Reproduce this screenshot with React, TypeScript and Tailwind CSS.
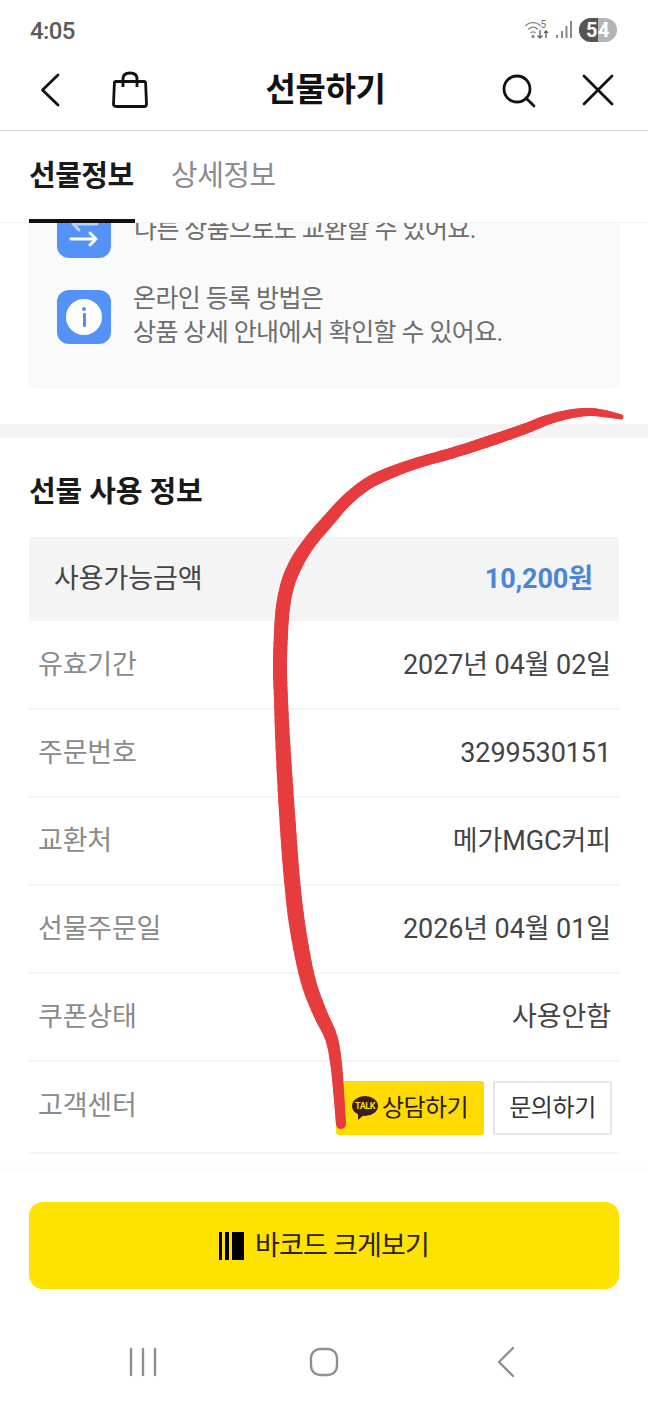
const FONT = "font-['Roboto','Noto_Sans_CJK_KR',sans-serif]";

function Row({ label, value }: { label: string; value: string }) {
  return (
    <div className="h-[88px] flex items-center justify-between border-b-2 border-[#f5f5f5] pl-[9px] pr-[8px]">
      <span className="text-[27px] text-[#8a8a8a] tracking-[-0.2px]">{label}</span>
      <span className="text-[27px] text-[#444444] tracking-[-0.1px]">{value}</span>
    </div>
  );
}

// Hand-drawn stroke: centre line points [x, y, width]
const STROKE: [number, number, number][] = [
  [621, 417, 5], [607, 414, 7], [590, 412, 8], [570, 414, 9], [547, 420, 10], [527, 428, 10.5],
  [500, 437.5, 11], [473, 446.5, 11], [447, 454.5, 11], [417, 463, 11], [387, 474, 12], [367, 484, 12],
  [347, 500, 12], [327, 522, 13], [310, 542, 13], [297, 562, 14], [288, 583, 14], [283, 607, 14],
  [281, 633, 14], [280, 667, 14], [281, 700, 14], [283, 747, 15], [287, 813, 16], [292, 880, 16],
  [298, 930, 16], [308, 980, 15], [320, 1013, 14], [331, 1037, 12.5], [336, 1063, 11.5], [339, 1097, 10.5],
  [341, 1124, 10],
];

function strokeSegments() {
  const out: { x1: number; y1: number; x2: number; y2: number; w: number }[] = [];
  const p = STROKE;
  for (let i = 0; i < p.length - 1; i++) {
    const a = p[Math.max(i - 1, 0)], b = p[i], c = p[i + 1], d = p[Math.min(i + 2, p.length - 1)];
    const at = (t: number) => {
      const f = (k: 0 | 1 | 2) =>
        0.5 * (2 * b[k] + (c[k] - a[k]) * t + (2 * a[k] - 5 * b[k] + 4 * c[k] - d[k]) * t * t + (3 * b[k] - a[k] - 3 * c[k] + d[k]) * t * t * t);
      return [f(0), f(1), f(2)];
    };
    for (let s = 0; s < 6; s++) {
      const u = at(s / 6), v = at((s + 1) / 6);
      out.push({ x1: u[0], y1: u[1], x2: v[0], y2: v[1], w: u[2] });
    }
  }
  return out;
}

export default function App() {
  return (
    <div className={`${FONT} relative w-[648px] h-[1404px] bg-white overflow-hidden flex flex-col`}>
      {/* status bar */}
      <div className="h-[60px] flex items-center justify-between pl-[30px] pr-[31px] shrink-0">
        <span className="text-[24px] font-medium text-[#5a5a5a] tracking-[-0.6px] mt-[1px]">4:05</span>
        <div className="flex items-center gap-[6px]">
          <svg width="48" height="24" viewBox="0 0 48 24" fill="none" stroke="#8a8a8a" strokeWidth="1.4">
            <path d="M0.5 8 C4 3.5 12 3.5 15.5 8" />
            <path d="M3 11.5 C6 8.5 10 8.5 13 11.5" />
            <path d="M5.5 15 C7 13.5 9 13.5 10.5 15" />
            <circle cx="8" cy="18.5" r="1" fill="#8a8a8a" />
            <text x="15.5" y="10" fontSize="10" fill="#707070" stroke="none" fontFamily="Roboto, sans-serif">5</text>
            <path d="M15 12 v8 M12.5 17.5 l2.5 2.5 l2.5 -2.5" stroke="#666" />
            <path d="M21 20 v-7 M19 15 l2 -2 l2 2" stroke="#666" />
            <path d="M32 20 v-3" strokeWidth="2" />
            <path d="M37 20 v-7" strokeWidth="2" />
            <path d="M41.5 20 v-12" strokeWidth="2" />
            <path d="M46 20 v-17" strokeWidth="2" />
          </svg>
          <div className="relative w-[38px] h-[24px] rounded-full overflow-hidden flex bg-[#b4b4b4]">
            <div className="w-[19px] h-full bg-[#555555]" />
            <span className="absolute inset-0 flex items-center justify-center text-[20px] font-bold text-white tracking-[0.5px]">54</span>
          </div>
        </div>
      </div>

      {/* header */}
      <div className="h-[71px] shrink-0 flex items-center justify-between border-b border-[#d8d8d8] pl-[38px] pr-[34px] pb-[10px]">
        <div className="flex items-center gap-[50px]">
          <svg width="24" height="36" viewBox="0 0 24 36" fill="none" stroke="#111" strokeWidth="2.8" strokeLinecap="round" strokeLinejoin="round">
            <path d="M20 3 L4.5 18 L20 33" />
          </svg>
          <svg width="36" height="38" viewBox="0 0 36 38" fill="none" stroke="#111" strokeWidth="2.8" strokeLinejoin="round">
            <path d="M4 10.5 H32 Q33.5 10.5 33.6 12 L34.5 33 Q34.5 35.5 32 35.5 H4 Q1.5 35.5 1.5 33 L2.4 12 Q2.5 10.5 4 10.5 Z" />
            <path d="M11 16 V8 Q11 2 18 2 Q25 2 25 8 V16" />
          </svg>
        </div>
        <span className="text-[33px] font-bold text-[#111] tracking-[-0.4px] ml-[2px]">선물하기</span>
        <div className="flex items-center gap-[45px]">
          <svg width="36" height="38" viewBox="0 0 36 38" fill="none" stroke="#111" strokeWidth="2.8" strokeLinecap="round">
            <circle cx="16" cy="18" r="13" />
            <path d="M25 27 L33 35" />
          </svg>
          <svg width="32" height="32" viewBox="0 0 32 32" fill="none" stroke="#111" strokeWidth="2.8" strokeLinecap="round">
            <path d="M2 2 L30 30 M30 2 L2 30" />
          </svg>
        </div>
      </div>

      {/* tabs */}
      <div className="h-[92px] shrink-0 flex pl-[29px] gap-[36px] border-b border-[#f3f3f3]">
        <div className="h-[92px] flex items-center border-b-[4px] border-[#111] pt-[4px] w-[106px]">
          <span className="text-[29px] font-bold text-[#1a1a1a] tracking-[-0.5px] whitespace-nowrap">선물정보</span>
        </div>
        <div className="h-[92px] flex items-center">
          <span className="text-[29px] text-[#8c8c8c] tracking-[-0.5px] whitespace-nowrap">상세정보</span>
        </div>
      </div>

      {/* scrolling content */}
      <div className="flex-1 overflow-hidden">
        <div className="mt-[-20px] mx-[29px] h-[185px] bg-[#fafafa] border border-[#f5f5f5] rounded-b-[6px] pl-[27px] flex flex-col">
          <div className="flex gap-[23px] h-[54px] shrink-0">
            <div className="w-[54px] h-[54px] rounded-[12px] bg-[#5592f7] flex items-center justify-center shrink-0">
              <svg width="34" height="34" viewBox="0 0 34 34" fill="none" stroke="#fff" strokeWidth="3" strokeLinecap="round" strokeLinejoin="round">
                <path d="M30 10 H6 M12 4 L6 10 L12 16" opacity="0.6" />
                <path d="M4 25 H29 M23 19 L29 25 L23 31" />
              </svg>
            </div>
            <p className="text-[25px] leading-[34px] text-[#6d6d6d] tracking-[-0.62px] whitespace-nowrap mt-[9px]">
              다른 상품으로도 교환할 수 있어요.
            </p>
          </div>
          <div className="flex gap-[23px] mt-[32px]">
            <div className="w-[54px] h-[54px] rounded-[12px] bg-[#5592f7] flex items-center justify-center shrink-0">
              <div className="w-[36px] h-[36px] rounded-full bg-white flex flex-col items-center justify-center gap-[2px]">
                <div className="w-[4px] h-[4px] rounded-full bg-[#5592f7]" />
                <div className="w-[3px] h-[14px] rounded-[1px] bg-[#5592f7]" />
              </div>
            </div>
            <p className="text-[25px] leading-[34px] text-[#6d6d6d] tracking-[-0.62px] whitespace-nowrap mt-[-8px] ml-[-1px]">
              온라인 등록 방법은
              <br />
              상품 상세 안내에서 확인할 수 있어요.
            </p>
          </div>
        </div>

        <div className="h-[14px] bg-[#f4f4f4] mt-[36px]" />

        <div className="px-[29px]">
          <h2 className="h-[99px] flex items-center text-[29px] font-bold text-[#1a1a1a] tracking-[-0.1px] pt-[10px]">선물 사용 정보</h2>
          <div className="h-[84px] bg-[#f4f4f4] flex items-center justify-between pl-[25px] pr-[26px] rounded-[2px]">
            <span className="text-[27px] text-[#444444] tracking-[-0.1px]">사용가능금액</span>
            <span className="text-[27px] font-bold text-[#4a86d8] tracking-[-0.1px]">10,200원</span>
          </div>
          <div className="mt-[1px]">
            <Row label="유효기간" value="2027년 04월 02일" />
            <Row label="주문번호" value="3299530151" />
            <Row label="교환처" value="메가MGC커피" />
            <Row label="선물주문일" value="2026년 04월 01일" />
            <Row label="쿠폰상태" value="사용안함" />
            <div className="h-[92px] flex items-center justify-between border-b-2 border-[#f5f5f5] pl-[9px] pr-[7px]">
              <span className="text-[27px] text-[#8a8a8a] tracking-[-0.2px] mb-[2px]">고객센터</span>
              <div className="flex items-center gap-[9px] mt-[1px]">
                <div className="w-[148px] h-[54px] bg-[#ffdc00] rounded-[3px] flex items-center justify-center gap-[4px]">
                  <div className="relative w-[26px] h-[24px] shrink-0">
                    <svg width="26" height="24" viewBox="0 0 26 24" className="absolute inset-0">
                      <ellipse cx="13" cy="10" rx="13" ry="10" fill="#3c1e1e" />
                      <path d="M6 16 L6 24 L13 18 Z" fill="#3c1e1e" />
                    </svg>
                    <span className="absolute inset-x-0 top-[5px] text-center text-[9px] leading-[10px] font-bold text-[#ffdc00] tracking-[-0.4px]">TALK</span>
                  </div>
                  <span className="text-[24px] text-[#2a2008] tracking-[-0.6px] whitespace-nowrap">상담하기</span>
                </div>
                <div className="w-[119px] h-[54px] bg-white border-2 border-[#e6e6e6] rounded-[3px] flex items-center justify-center">
                  <span className="text-[24px] text-[#333] tracking-[-0.4px] whitespace-nowrap">문의하기</span>
                </div>
              </div>
            </div>
          </div>
        </div>
      </div>

      {/* bottom action */}
      <div className="bg-white shadow-[0_-8px_12px_rgba(0,0,0,0.015)] px-[29px] pt-[31px] h-[233px] flex flex-col absolute bottom-0 left-0 right-0">
        <div className="h-[87px] bg-[#ffe300] rounded-[14px] flex items-center justify-center gap-[11px] shrink-0">
          <div className="flex items-stretch h-[28px] gap-[3px]">
            <div className="w-[3px] bg-black" />
            <div className="w-[4px] bg-black" />
            <div className="w-[12px] bg-black" />
          </div>
          <span className="text-[27px] text-[#2a2200] tracking-[-0.8px] mt-[2px]">바코드 크게보기</span>
        </div>
        {/* system nav */}
        <div className="mt-[57px] flex items-center pl-[100px] text-[0px]">
          <svg width="28" height="30" viewBox="0 0 28 30" fill="none" stroke="#8f8f8f" strokeWidth="2.4" strokeLinecap="round">
            <path d="M2 2 V28 M14 2 V28 M26 2 V28" />
          </svg>
          <svg width="30" height="30" viewBox="0 0 30 30" fill="none" stroke="#8f8f8f" strokeWidth="2.4" className="ml-[152px]">
            <rect x="2" y="2" width="26" height="26" rx="9" />
          </svg>
          <svg width="20" height="32" viewBox="0 0 20 32" fill="none" stroke="#8f8f8f" strokeWidth="2.4" strokeLinecap="round" strokeLinejoin="round" className="ml-[157px]">
            <path d="M17 2 L3 16 L17 30" />
          </svg>
        </div>
      </div>

      {/* hand-drawn red annotation */}
      <svg className="absolute inset-0 pointer-events-none" width="648" height="1404" viewBox="0 0 648 1404" fill="none" stroke="#e73c3e" strokeLinecap="round">
        {strokeSegments().map((s, i) => (
          <line key={i} x1={s.x1} y1={s.y1} x2={s.x2} y2={s.y2} strokeWidth={s.w} />
        ))}
      </svg>
    </div>
  );
}
